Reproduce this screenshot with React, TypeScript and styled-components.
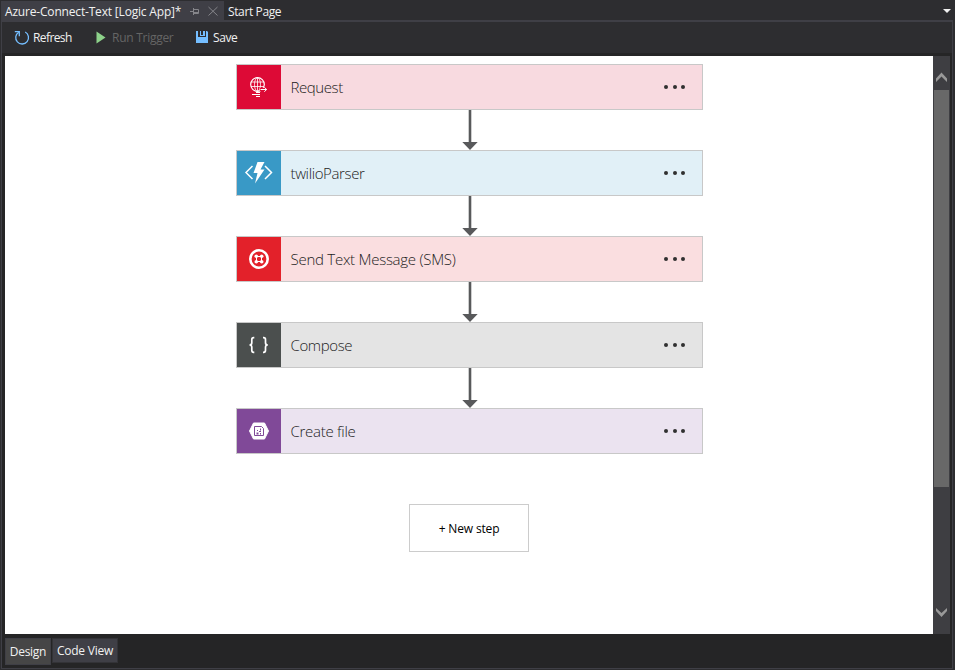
import React from 'react';
import styled, { createGlobalStyle } from 'styled-components';

const GlobalStyle = createGlobalStyle`
  * { box-sizing: border-box; }
  body { margin: 0; overflow: hidden; }
`;

const Window = styled.div`
  width: 955px;
  height: 670px;
  display: flex;
  flex-direction: column;
  background: #2d2d30;
  color: #f1f1f1;
  font: 12px/16px "Open Sans", "Noto Sans", sans-serif;
  white-space: nowrap;
`;

const TabStrip = styled.div`
  height: 20px;
  display: flex;
  align-items: center;
  padding: 1px 3px 0 1px;
`;

const ActiveTab = styled.div`
  width: 223px;
  height: 19px;
  display: flex;
  align-items: center;
  padding: 3px 4px 0 4px;
  background: #3f3f46;
`;

const TabTitle = styled.span<{ $width: number; $spacing: number }>`
  width: ${(p) => p.$width}px;
  letter-spacing: ${(p) => p.$spacing}px;
`;

const InactiveTab = styled.div`
  flex: 1;
  padding: 3px 0 0 4px;
`;

const Frame = styled.div`
  flex: 1;
  min-height: 0;
  display: flex;
  flex-direction: column;
  margin: 0 2px 1px 1px;
  border: 1px solid #3f3f46;
  border-top-width: 2px;
`;

const Toolbar = styled.div`
  height: 31px;
  display: flex;
  align-items: center;
  padding-left: 12px;
`;

const ToolButton = styled.div<{ $width: number; $gap: number; $spacing: number; $muted?: boolean }>`
  width: ${(p) => p.$width}px;
  display: flex;
  align-items: center;
  gap: ${(p) => p.$gap}px;
  letter-spacing: ${(p) => p.$spacing}px;
  color: ${(p) => (p.$muted ? '#656565' : '#f1f1f1')};
`;

const Body = styled.div`
  flex: 1;
  display: flex;
  flex-direction: column;
  padding: 3px 2px 0 3px;
  background: #252526;
`;

const Workspace = styled.div`
  height: 578px;
  display: flex;
`;

const Canvas = styled.div`
  width: 928px;
  display: flex;
  flex-direction: column;
  align-items: center;
  padding: 8px 0 0 1px;
  background: #fff;
`;

const Card = styled.div<{ $bg: string }>`
  width: 467px;
  height: 46px;
  display: flex;
  align-items: center;
  border: 1px solid #c8c8c8;
  background: ${(p) => p.$bg};
  color: #1c1c1c;
`;

const CardIcon = styled.div<{ $color: string }>`
  width: 44px;
  height: 44px;
  background: ${(p) => p.$color};
`;

const CardTitle = styled.div<{ $spacing: number }>`
  flex: 1;
  padding: 0 0 0 9.5px;
  font: 300 15px/20px "Open Sans", "Noto Sans", sans-serif;
  letter-spacing: ${(p) => p.$spacing}px;
`;

const Menu = styled.div`
  display: flex;
  gap: 4.4px;
  padding: 0 17px 1px 0;
`;

const Dot = styled.i`
  width: 4px;
  height: 4px;
  border-radius: 50%;
  background: #303030;
`;

const Connector = styled.div`
  height: 40px;
  padding-left: 1px;
  svg { display: block; }
`;

const NewStep = styled.div`
  width: 120px;
  height: 48px;
  margin: 50px 1px 0 0;
  display: flex;
  align-items: center;
  justify-content: center;
  padding-top: 2px;
  border: 1px solid #ccc;
  color: #000;
  letter-spacing: -0.15px;
`;

const ScrollBar = styled.div`
  width: 17px;
  display: flex;
  flex-direction: column;
  align-items: center;
  background: #3e3e42;
  svg { display: block; }
`;

const Thumb = styled.div`
  width: 15px;
  height: 397px;
  background: #686868;
`;

const Track = styled.div`
  flex: 1;
`;

const ViewTabs = styled.div`
  display: flex;
  align-items: flex-start;
  padding-top: 4px;
  gap: 1px;
`;

const ViewTab = styled.div<{ $active?: boolean; $width: number; $spacing: number }>`
  width: ${(p) => p.$width}px;
  height: ${(p) => (p.$active ? 27 : 25)}px;
  padding-top: ${(p) => (p.$active ? 5 : 4)}px;
  border: 1px solid ${(p) => (p.$active ? '#3f3f46' : '#333337')};
  background: ${(p) => (p.$active ? '#464646' : '#3f3f46')};
  text-align: center;
  letter-spacing: ${(p) => p.$spacing}px;
`;

const RequestIcon = () => (
  <svg width="44" height="44" fill="none" stroke="#fff">
    <circle cx="20.5" cy="19.5" r="6.8" strokeWidth="1.2" />
    <ellipse cx="20.5" cy="19.5" rx="3" ry="6.8" strokeWidth=".8" />
    <path d="M14 17h13M14 21.5h13M20.5 13v14" strokeWidth=".8" />
    <path d="M23 24.5h6M27.5 22l2.4 2.5-2.4 2.5" stroke="#dd0a36" strokeWidth="3" />
    <path d="M23.5 24.5h6M27.3 22.3l2.4 2.2-2.4 2.2" strokeWidth="1" />
    <path d="M19 27.5h4M15 29.5h8M19 31.5h4" />
  </svg>
);

const FunctionIcon = () => (
  <svg width="44" height="44" fill="none" stroke="#fff">
    <path d="M15.5 15L9 21.5l6.5 6.5M28 15l6.5 6.5L28 28" strokeWidth="1.5" />
    <path d="M20.5 11h7l-4 7.5h4L18 32.5l2.5-10.5h-4z" fill="#fff" stroke="none" />
  </svg>
);

const TwilioIcon = () => (
  <svg width="44" height="44" fill="none" stroke="#fff">
    <circle cx="22" cy="22" r="8.7" strokeWidth="2.6" />
    <path d="M19.5 19.5h5v5h-5z" strokeWidth="1" />
    <g fill="#fff" stroke="none">
      <circle cx="19.3" cy="19.3" r="1.8" />
      <circle cx="24.7" cy="19.3" r="1.8" />
      <circle cx="19.3" cy="24.7" r="1.8" />
      <circle cx="24.7" cy="24.7" r="1.8" />
    </g>
  </svg>
);

const BracesIcon = () => (
  <svg width="44" height="44" fill="none" stroke="#fff" strokeWidth="1.7">
    <path d="M17.3 14.7h-.7q-1.8 0-1.8 2v3q0 2.3-2.3 2.3 2.3 0 2.3 2.3v3q0 2 1.8 2h.7" />
    <path d="M26 14.7h.7q1.8 0 1.8 2v3q0 2.3 2.3 2.3-2.3 0-2.3 2.3v3q0 2-1.8 2H26" />
  </svg>
);

const FileIcon = () => (
  <svg width="44" height="44">
    <path d="M12.5 22l4-8h11l4 8-4 8h-11z" fill="#fff" stroke="#fff" strokeLinejoin="round" />
    <path d="M17.5 17.5h7l2 2v7h-9z" fill="none" stroke="#804998" />
    <path d="M20 21h1v1h-1zM23 19.5h1v2h-1zM22 22h2v1h-2zM19.5 23.5h2v2h-2zM23 24h1v1.5h-1z" fill="#804998" />
  </svg>
);

const Arrow = () => (
  <svg width="16" height="40" fill="#58595b">
    <path d="M6.7 0h2.6v32h6.4L8 40 .3 32h6.4z" />
  </svg>
);

const steps = [
  { title: 'Request', color: '#dd0a36', bg: '#f8dae0', spacing: -0.42, icon: <RequestIcon /> },
  { title: 'twilioParser', color: '#3999c6', bg: '#e1f0f7', spacing: -0.37, icon: <FunctionIcon /> },
  { title: 'Send Text Message (SMS)', color: '#e3212a', bg: '#fadee0', spacing: -0.26, icon: <TwilioIcon /> },
  { title: 'Compose', color: '#4b4f4e', bg: '#e4e4e4', spacing: -0.37, icon: <BracesIcon /> },
  { title: 'Create file', color: '#804998', bg: '#ebe3f0', spacing: -0.27, icon: <FileIcon /> },
];

export default function App() {
  return (
    <Window>
      <GlobalStyle />
      <TabStrip>
        <ActiveTab>
          <TabTitle $width={186} $spacing={-0.18}>Azure-Connect-Text [Logic App]*</TabTitle>
          <svg width="30" height="12" fill="none" stroke="#85858a">
            <path d="M0 5.5h3.5M3.5 2v7M4 3.5h4.5v4H4M4 6.5h4.5" />
            <path d="M18.5 1l9 8.5M27.5 1l-9 8.5" />
          </svg>
        </ActiveTab>
        <InactiveTab>
          <TabTitle $width={60} $spacing={-0.38}>Start Page</TabTitle>
        </InactiveTab>
        <svg width="10" height="8" fill="#f1f1f1"><path d="M1 2h8L5 6z" /></svg>
      </TabStrip>
      <Frame>
        <Toolbar>
          <ToolButton $width={80} $gap={3} $spacing={-0.6}>
            <svg width="16" height="16" fill="none" stroke="#75beff" strokeWidth="1.3">
              <path d="M4.7 2.2A6.4 6.4 0 1 0 11.2 2" />
              <path d="M.8 1.7h4.5v4.5" />
            </svg>
            Refresh
          </ToolButton>
          <ToolButton $width={102} $gap={4} $spacing={-0.27} $muted>
            <svg width="14" height="16"><path d="M2.5 1.5v12l9-6z" fill="#8dd28a" /></svg>
            Run Trigger
          </ToolButton>
          <ToolButton $width={60} $gap={4} $spacing={-0.4}>
            <svg width="13" height="16">
              <path d="M0 1h2v6h8V1h1l1 1v11H0z" fill="#75beff" />
              <path d="M4 1h5v5H4z" fill="#75beff" />
              <path d="M5 1h2v4H5z" fill="#2d2d30" />
            </svg>
            Save
          </ToolButton>
        </Toolbar>
        <Body>
          <Workspace>
            <Canvas>
              {steps.map((step, i) => (
                <React.Fragment key={step.title}>
                  {i > 0 && <Connector><Arrow /></Connector>}
                  <Card $bg={step.bg}>
                    <CardIcon $color={step.color}>{step.icon}</CardIcon>
                    <CardTitle $spacing={step.spacing}>{step.title}</CardTitle>
                    <Menu><Dot /><Dot /><Dot /></Menu>
                  </Card>
                </React.Fragment>
              ))}
              <NewStep>+ New step</NewStep>
            </Canvas>
            <ScrollBar>
              <svg width="17" height="34"><path d="M3 22.5l5.5-6 5.5 6v3.5l-5.5-5.5L3 26z" fill="#999" /></svg>
              <Thumb />
              <Track />
              <svg width="17" height="34"><path d="M3 8l5.5 5L14 8v3l-5.5 6L3 11z" fill="#999" /></svg>
            </ScrollBar>
          </Workspace>
          <ViewTabs>
            <ViewTab $active $width={46} $spacing={-0.3}>Design</ViewTab>
            <ViewTab $width={66} $spacing={-0.22}>Code View</ViewTab>
          </ViewTabs>
        </Body>
      </Frame>
    </Window>
  );
}
